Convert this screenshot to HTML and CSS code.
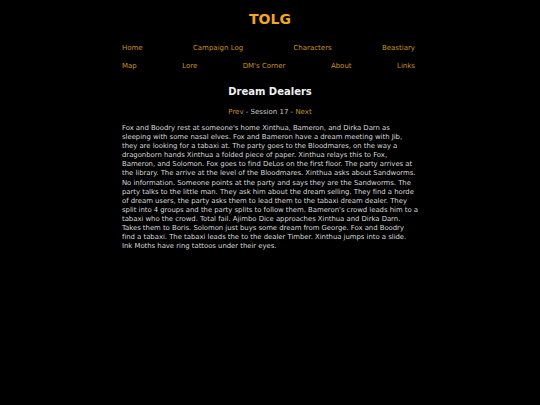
FILE: index.html
```html
<!DOCTYPE html>
<html>
<head>
<meta charset="utf-8">
<link rel="stylesheet" href="styles.css">
</head>
<body>
<div class="page">
  <header class="site-header">
    <h1 class="site-title">TOLG</h1>
    <nav class="nav">
      <div class="nav-row">
        <a href="#">Home</a>
        <a href="#">Campaign Log</a>
        <a href="#">Characters</a>
        <a href="#">Beastiary</a>
      </div>
      <div class="nav-row">
        <a href="#">Map</a>
        <a href="#">Lore</a>
        <a href="#">DM's Corner</a>
        <a href="#">About</a>
        <a href="#">Links</a>
      </div>
    </nav>
  </header>
  <main class="content">
    <h2 class="session-title">Dream Dealers</h2>
    <div class="session-nav"><a href="#">Prev</a> - Session 17 - <a href="#">Next</a></div>
    <p class="session-text">Fox and Boodry rest at someone's home Xinthua, Bameron, and Dirka Darn as sleeping with some nasal elves. Fox and Bameron have a dream meeting with Jib, they are looking for a tabaxi at. The party goes to the Bloodmares, on the way a dragonborn hands Xinthua a folded piece of paper. Xinthua relays this to Fox, Bameron, and Solomon. Fox goes to find DeLos on the first floor. The party arrives at the library. The arrive at the level of the Bloodmares. Xinthua asks about Sandworms. No information. Someone points at the party and says they are the Sandworms. The party talks to the little man. They ask him about the dream selling. They find a horde of dream users, the party asks them to lead them to the tabaxi dream dealer. They split into 4 groups and the party splits to follow them. Bameron's crowd leads him to a tabaxi who the crowd. Total fail. Ajimbo Dice approaches Xinthua and Dirka Darn. Takes them to Boris. Solomon just buys some dream from George. Fox and Boodry find a tabaxi. The tabaxi leads the to the dealer Timber. Xinthua jumps into a slide. Ink Moths have ring tattoos under their eyes.</p>
  </main>
</div>
</body>
</html>
```

FILE: styles.css
```css
html, body {
  margin: 0;
  padding: 0;
  background: #000;
}
body {
  font-family: "DejaVu Sans", Verdana, sans-serif;
  color: #dcdcdc;
}
.page {
  width: 296px;
  margin: 0 auto;
}
.site-header {
  padding-top: 11px;
}
.site-title {
  margin: 0;
  text-align: center;
  font-size: 14px;
  font-weight: bold;
  color: #f2a623;
  line-height: 17px;
}
.nav {
  margin-top: 15px;
  padding-right: 3px;
  display: flex;
  flex-direction: column;
  gap: 8px;
}
.nav-row {
  display: flex;
  justify-content: space-between;
}
.nav a, .session-nav a {
  color: #c8901f;
  text-decoration: none;
}
.nav a {
  font-size: 7px;
  line-height: 10px;
}
.content {
  margin-top: 14px;
}
.session-title {
  margin: 0;
  text-align: center;
  font-size: 10px;
  line-height: 13px;
  color: #f0f0f0;
}
.session-nav {
  margin-top: 9px;
  text-align: center;
  font-size: 7px;
  line-height: 10px;
  color: #c8c8c8;
}
.session-text {
  margin: 7px 0 0;
  font-size: 6.9px;
  letter-spacing: -0.03px;
  line-height: 9.1px;
  color: #d8d8d8;
}
```
